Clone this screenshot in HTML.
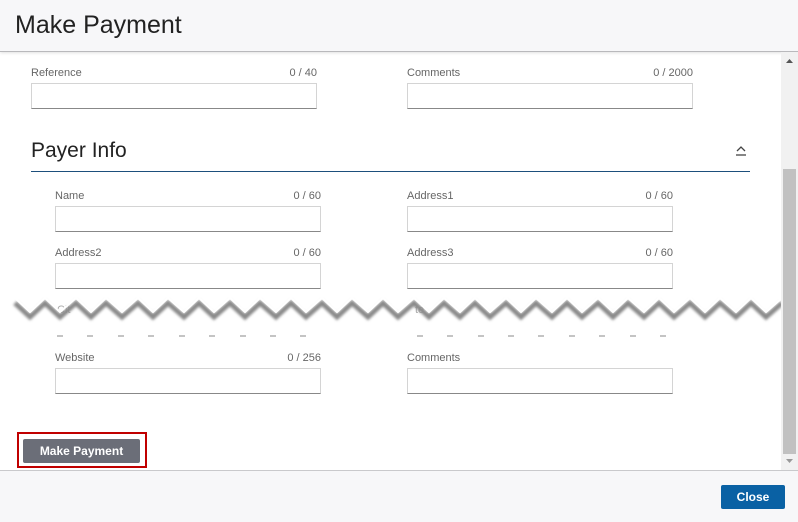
<!DOCTYPE html>
<html><head><style>
*{box-sizing:border-box;margin:0;padding:0}
body{width:798px;height:522px;background:#fff;font-family:"Liberation Sans",sans-serif;position:relative;overflow:hidden;color:#555}
.hdr{position:absolute;left:0;top:0;width:798px;height:52px;background:#f7f7f9;border-bottom:1px solid #b9b9bc;box-shadow:0 1px 3px rgba(0,0,0,.12)}
.hdr h1{position:absolute;left:15px;top:11px;font-size:25px;font-weight:normal;color:#222}
.lbl{position:absolute;font-size:11px;color:#666}
.cnt{position:absolute;font-size:11px;color:#666;text-align:right}
.inp{position:absolute;height:26px;border:1px solid #d4d4d4;border-bottom:1px solid #888;background:#fff}
.sb{position:absolute;left:781px;top:52px;width:17px;height:418px;background:#f1f1f1}
.thumb{position:absolute;left:783px;top:169px;width:13px;height:285px;background:#c1c1c1}
.ftr{position:absolute;left:0;top:470px;width:798px;height:52px;background:#f7f7f9;border-top:1px solid #c9c9cc}
</style></head><body>
<div class="hdr"><h1>Make Payment</h1></div>

<div class="lbl" style="left:31px;top:67px">Reference</div><div class="cnt" style="left:260px;top:67px;width:57px">0 / 40</div>
<div class="inp" style="left:31px;top:83px;width:286px"></div>
<div class="lbl" style="left:407px;top:67px">Comments</div><div class="cnt" style="left:620px;top:67px;width:73px">0 / 2000</div>
<div class="inp" style="left:407px;top:83px;width:286px"></div>

<div style="position:absolute;left:31px;top:139px;font-size:21px;color:#222">Payer Info</div>
<svg style="position:absolute;left:735px;top:145px" width="12" height="12"><path d="M2 6 L6 2 L10 6" fill="none" stroke="#444" stroke-width="1.3"/><line x1="1" y1="10" x2="11" y2="10" stroke="#444" stroke-width="1.3"/></svg>
<div style="position:absolute;left:31px;top:171px;width:719px;height:1px;background:#1d4f7c"></div>

<div class="lbl" style="left:55px;top:190px">Name</div><div class="cnt" style="left:260px;top:190px;width:61px">0 / 60</div>
<div class="inp" style="left:55px;top:206px;width:266px"></div>
<div class="lbl" style="left:407px;top:190px">Address1</div><div class="cnt" style="left:612px;top:190px;width:61px">0 / 60</div>
<div class="inp" style="left:407px;top:206px;width:266px"></div>

<div class="lbl" style="left:55px;top:247px">Address2</div><div class="cnt" style="left:260px;top:247px;width:61px">0 / 60</div>
<div class="inp" style="left:55px;top:263px;width:266px"></div>
<div class="lbl" style="left:407px;top:247px">Address3</div><div class="cnt" style="left:612px;top:247px;width:61px">0 / 60</div>
<div class="inp" style="left:407px;top:263px;width:266px"></div>

<div class="lbl" style="left:57px;top:304px;color:#aaa">Cit</div>
<div class="lbl" style="left:415px;top:304px;color:#aaa">te</div>
<svg style="position:absolute;left:0;top:290px" width="781" height="60">
<defs><filter id="b" x="-5%" y="-50%" width="110%" height="200%"><feGaussianBlur stdDeviation="1.4"/></filter></defs>
<polyline filter="url(#b)" transform="translate(0,3)" points="15,10 30,24 45,10 60,24 76,10 91,24 106,10 122,24 138,10 153,24 168,10 184,24 199,10 214,24 230,10 245,24 260,10 276,24 291,10 306,24 322,10 337,24 352,10 368,24 383,10 398,24 414,10 429,24 444,10 460,24 475,10 490,24 506,10 521,24 536,10 552,24 567,10 582,24 598,10 613,24 628,10 644,24 659,10 674,24 690,10 705,24 720,10 736,24 751,10 766,24 782,10" fill="none" stroke="#8a8a8a" stroke-width="5"/>
<polyline points="15,8 30,22 45,8 60,22 76,8 91,22 106,8 122,22 138,8 153,22 168,8 184,22 199,8 214,22 230,8 245,22 260,8 276,22 291,8 306,22 322,8 337,22 352,8 368,22 383,8 398,22 414,8 429,22 444,8 460,22 475,8 490,22 506,8 521,22 536,8 552,22 567,8 582,22 598,8 613,22 628,8 644,22 659,8 674,22 690,8 705,22 720,8 736,22 751,8 766,22 782,8" fill="none" stroke="#fff" stroke-width="2"/>
<g stroke="#888" stroke-width="1">
<path d="M57 46h6M87 46h6M118 46h6M148 46h6M179 46h6M209 46h6M240 46h6M270 46h6M300 46h6"/>
<path d="M417 46h6M447 46h6M478 46h6M508 46h6M538 46h6M569 46h6M599 46h6M630 46h6M660 46h6"/>
</g></svg>

<div class="lbl" style="left:55px;top:352px">Website</div><div class="cnt" style="left:260px;top:352px;width:61px">0 / 256</div>
<div class="inp" style="left:55px;top:368px;width:266px"></div>
<div class="lbl" style="left:407px;top:352px">Comments</div>
<div class="inp" style="left:407px;top:368px;width:266px"></div>

<div style="position:absolute;left:17px;top:432px;width:130px;height:36px;border:2px solid #c00000"></div>
<div style="position:absolute;left:23px;top:439px;width:117px;height:24px;background:#6b6e78;border-radius:2px;color:#fff;font-size:12px;font-weight:bold;text-align:center;line-height:24px">Make Payment</div>

<div class="sb"></div>
<div class="thumb"></div>
<svg style="position:absolute;left:783px;top:57px" width="13" height="8"><path d="M3 6L6.5 2L10 6Z" fill="#555"/></svg>
<svg style="position:absolute;left:783px;top:457px" width="13" height="8"><path d="M3 2L6.5 6L10 2Z" fill="#999"/></svg>

<div class="ftr"></div>
<div style="position:absolute;left:721px;top:485px;width:64px;height:24px;background:#0a61a4;border-radius:2px;color:#fff;font-size:12px;font-weight:bold;text-align:center;line-height:24px">Close</div>
</body></html>
